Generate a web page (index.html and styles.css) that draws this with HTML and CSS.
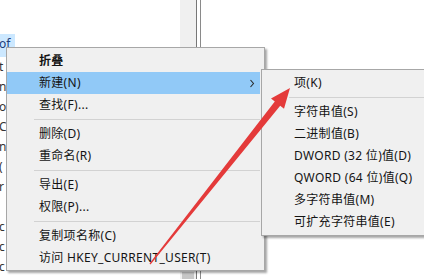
FILE: index.html
```html
<!DOCTYPE html>
<html lang="zh-CN">
<head>
<meta charset="utf-8">
<title>Registry context menu</title>
<link rel="stylesheet" href="styles.css">
</head>
<body>
<div class="screen">
  <div class="tree">
    <div class="row sel">of</div>
    <div class="row">t</div>
    <div class="row">n</div>
    <div class="row">o</div>
    <div class="row">C</div>
    <div class="row">n</div>
    <div class="row">(</div>
    <div class="row">r</div>
    <div class="row"></div>
    <div class="row">c</div>
    <div class="row">c</div>
    <div class="row">c</div>
  </div>
  <div class="scroll"><div class="thumb"></div></div>
  <div class="gap"></div>
  <div class="values"></div>

  <div class="menu main">
    <div class="item bold">折叠</div>
    <div class="item hot">新建(N)<svg class="chev" width="6" height="9" viewBox="0 0 6 9"><path d="M1.5 1 L4.5 4.5 L1.5 8" fill="none" stroke="#2a2a2a" stroke-width="1.1"/></svg></div>
    <div class="item">查找(F)...</div>
    <div class="sep"></div>
    <div class="item">删除(D)</div>
    <div class="item">重命名(R)</div>
    <div class="sep"></div>
    <div class="item">导出(E)</div>
    <div class="item">权限(P)...</div>
    <div class="sep"></div>
    <div class="item">复制项名称(C)</div>
    <div class="item">访问 HKEY_CURRENT_USER(T)</div>
  </div>

  <div class="menu sub">
    <div class="item">项(K)</div>
    <div class="sep"></div>
    <div class="item">字符串值(S)</div>
    <div class="item">二进制值(B)</div>
    <div class="item">DWORD (32 位)值(D)</div>
    <div class="item">QWORD (64 位)值(Q)</div>
    <div class="item">多字符串值(M)</div>
    <div class="item">可扩充字符串值(E)</div>
  </div>

  <svg class="arrow" width="424" height="279" viewBox="0 0 424 279">
    <polygon points="290,88 284,108.8 280.2,105.8 150.5,264.4 149.5,263.6 274.8,101.4 271,98.4" fill="#e43a3a"/>
  </svg>
</div>
</body>
</html>
```

FILE: styles.css
```css
* { box-sizing: border-box; }
html, body { margin: 0; padding: 0; }
body {
  width: 424px;
  height: 279px;
  overflow: hidden;
  background: #fff;
  font-family: "Noto Sans", "Noto Sans CJK SC", sans-serif;
  font-size: 12px;
  color: #141414;
}
.screen {
  position: relative;
  width: 424px;
  height: 279px;
  display: flex;
}
.tree {
  width: 180px;
  padding-top: 34px;
  display: flex;
  flex-direction: column;
  overflow: hidden;
}
.row {
  height: 20px;
  line-height: 20px;
  padding-left: 0;
  margin-left: -1px;
  color: #333;
  white-space: nowrap;
}
.row.sel {
  height: 23px;
  width: 16px;
  background: #cce8ff;
  color: #1d3d7a;
}
.scroll {
  width: 17px;
  background: #f0f0f0;
  border-right: 1px solid #777;
  display: flex;
  flex-direction: column;
  justify-content: flex-end;
}
.thumb {
  height: 7px;
  margin: 0 2px 0 2px;
  background: #c6c6c6;
}
.gap {
  width: 4px;
  border-right: 1px solid #8a8a8a;
}
.values { flex: 1; }

.menu {
  position: absolute;
  background: #f0f0f0;
  border: 1px solid #a7a7a7;
  box-shadow: 2px 2px 2px rgba(0, 0, 0, 0.35);
  display: flex;
  flex-direction: column;
}
.main {
  left: 6px;
  top: 47px;
  width: 259px;
  height: 224px;
  padding: 2px 4px 1px 0;
}
.sub {
  left: 261px;
  top: 69px;
  width: 200px;
  height: 167px;
  padding: 2px 0 1px 0;
}
.item {
  position: relative;
  height: 22px;
  line-height: 22px;
  padding-left: 32px;
  letter-spacing: 0.3px;
  white-space: nowrap;
}
.item.bold { font-weight: bold; }
.item.hot { background: #91c9f7; }
.chev {
  position: absolute;
  right: 5px;
  top: 7px;
}
.sep {
  height: 7px;
  display: flex;
  align-items: center;
  padding-left: 27px;
}
.sep::before {
  content: "";
  flex: 1;
  height: 1px;
  background: #d2d2d2;
}
.arrow {
  position: absolute;
  left: 0;
  top: 0;
  pointer-events: none;
}
```
